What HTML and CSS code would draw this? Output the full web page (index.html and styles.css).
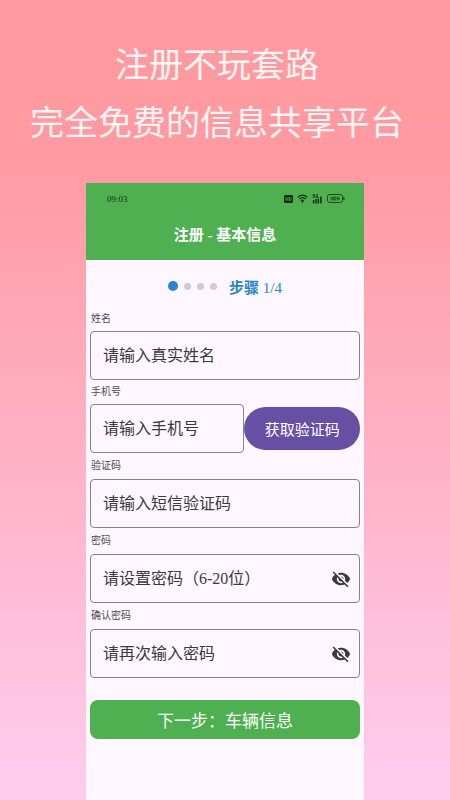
FILE: index.html
```html
<!DOCTYPE html>
<html lang="zh-CN">

<head>
    <meta charset="UTF-8">
    <meta name="viewport" content="width=device-width, initial-scale=1.0">
    <title>注册 - 基本信息</title>
    <link rel="stylesheet" href="styles.css">
</head>

<body>
    <h1 class="slogan">注册不玩套路<br>完全免费的信息共享平台</h1>

    <div class="phone">
        <header class="topbar">
            <div class="status">
                <span>09:03</span>
                <div class="status-icons">
                    <!-- HD -->
                    <svg width="9" height="8" viewBox="0 0 9 8">
                        <rect width="9" height="8" rx="1" fill="#12300f" />
                        <path d="M2 2.2v3.6M4 2.2v3.6M2 4h2M5.5 2.5v3h.6q1.2 0 1.2-1.5t-1.2-1.5z" fill="none" stroke="#4eb050" stroke-width=".7" />
                    </svg>
                    <!-- wifi -->
                    <svg width="11" height="9" viewBox="0 0 11 9">
                        <path d="M.7 3.2q4.8-4.2 9.6 0M2.3 5q3.2-2.7 6.4 0M3.9 6.7q1.6-1.3 3.2 0" fill="none" stroke="#12300f" stroke-width="1.2" />
                        <circle cx="5.5" cy="7.9" r=".9" fill="#12300f" />
                    </svg>
                    <!-- 5G -->
                    <svg width="11" height="10" viewBox="0 0 11 10">
                        <path d="M2.8.6H1v1.3h1.7v1.5H.8M6 .6H4.2v2.8H6V2.2h-.8" fill="none" stroke="#12300f" stroke-width=".8" />
                        <path d="M.8 6h1.5v3.5H.8zM3.2 5h1.5v4.5H3.2zM5.6 4.5h1.5v5H5.6zM8.2 2.5h1.5v7H8.2z" fill="#12300f" />
                    </svg>
                    <!-- battery -->
                    <svg class="battery" width="18" height="9" viewBox="0 0 18 9">
                        <rect x=".5" y=".5" width="15" height="8" rx="2" fill="none" stroke="#12300f" />
                        <rect x="3" y="2.5" width="10" height="4" fill="#12300f" opacity=".35" />
                        <path d="M5 3v3M6.5 3h1.8v3H6.5zM10 3v1.5h1.8M11.8 3v3" fill="none" stroke="#12300f" stroke-width=".6" />
                        <rect x="16.2" y="3" width="1.3" height="3" rx=".6" fill="#12300f" />
                    </svg>
                </div>
            </div>
            <h2 class="title">注册 - 基本信息</h2>
        </header>

        <form class="form">
            <div class="steps">
                <ul class="dots">
                    <li class="current"></li>
                    <li></li>
                    <li></li>
                    <li></li>
                </ul>
                <span class="step-text"><b>步骤</b> 1/4</span>
            </div>

            <label class="label" for="name">姓名</label>
            <div class="field">
                <input type="text" id="name" placeholder="请输入真实姓名">
            </div>

            <label class="label" for="phone">手机号</label>
            <div class="row">
                <div class="field">
                    <input type="tel" id="phone" placeholder="请输入手机号">
                </div>
                <button type="button" class="btn-code">获取验证码</button>
            </div>

            <label class="label" for="code">验证码</label>
            <div class="field">
                <input type="text" id="code" placeholder="请输入短信验证码">
            </div>

            <label class="label" for="pwd">密码</label>
            <div class="field">
                <input type="password" id="pwd" placeholder="请设置密码（6-20位）">
                <button type="button" class="eye" aria-label="显示密码">
                    <svg width="20" height="20" viewBox="0 0 24 24">
                        <path d="M12 7c2.76 0 5 2.24 5 5 0 .65-.13 1.26-.36 1.83l2.92 2.92c1.51-1.26 2.7-2.89 3.43-4.75-1.73-4.39-6-7.5-11-7.5-1.4 0-2.74.25-3.98.7l2.16 2.16C10.74 7.13 11.35 7 12 7zM2 4.27l2.28 2.28.46.46C3.08 8.3 1.78 10.02 1 12c1.73 4.39 6 7.5 11 7.5 1.55 0 3.03-.3 4.38-.84l.42.42L19.73 22 21 20.73 3.27 3 2 4.27zM7.53 9.8l1.55 1.55c-.05.21-.08.43-.08.65 0 1.66 1.34 3 3 3 .22 0 .44-.03.65-.08l1.55 1.55c-.67.33-1.41.53-2.2.53-2.76 0-5-2.24-5-5 0-.79.2-1.53.53-2.2zm4.31-.78l3.15 3.15.02-.16c0-1.66-1.34-3-3-3l-.17.01z" />
                    </svg>
                </button>
            </div>

            <label class="label" for="pwd2">确认密码</label>
            <div class="field">
                <input type="password" id="pwd2" placeholder="请再次输入密码">
                <button type="button" class="eye" aria-label="显示密码">
                    <svg width="20" height="20" viewBox="0 0 24 24">
                        <path d="M12 7c2.76 0 5 2.24 5 5 0 .65-.13 1.26-.36 1.83l2.92 2.92c1.51-1.26 2.7-2.89 3.43-4.75-1.73-4.39-6-7.5-11-7.5-1.4 0-2.74.25-3.98.7l2.16 2.16C10.74 7.13 11.35 7 12 7zM2 4.27l2.28 2.28.46.46C3.08 8.3 1.78 10.02 1 12c1.73 4.39 6 7.5 11 7.5 1.55 0 3.03-.3 4.38-.84l.42.42L19.73 22 21 20.73 3.27 3 2 4.27zM7.53 9.8l1.55 1.55c-.05.21-.08.43-.08.65 0 1.66 1.34 3 3 3 .22 0 .44-.03.65-.08l1.55 1.55c-.67.33-1.41.53-2.2.53-2.76 0-5-2.24-5-5 0-.79.2-1.53.53-2.2zm4.31-.78l3.15 3.15.02-.16c0-1.66-1.34-3-3-3l-.17.01z" />
                    </svg>
                </button>
            </div>

            <button type="button" class="btn-next">下一步：车辆信息</button>
        </form>
    </div>
</body>

</html>
```
FILE: styles.css
```css
* {
    margin: 0;
    padding: 0;
    box-sizing: border-box;
}

body {
    min-height: 100vh;
    display: flex;
    flex-direction: column;
    background: linear-gradient(#ff9aa0, #ff9aa2 20%, #ffcdef);
    font-family: "Liberation Serif", "Noto Sans CJK SC", serif;
}

input,
button {
    font-family: inherit;
    border: none;
    background: none;
}

button {
    cursor: pointer;
}

.slogan {
    padding: 37px 16px 30px 0;
    font-size: 34px;
    font-weight: 400;
    line-height: 58px;
    text-align: center;
    color: #fff4f2;
}

/* 手机界面 */
.phone {
    flex: 1;
    margin: 0 86px;
    background: #fef7ff;
}

.topbar {
    background: #4eb050;
}

.status {
    height: 31px;
    padding: 0 19px 0 21px;
    display: flex;
    align-items: center;
    justify-content: space-between;
    font-size: 9px;
    color: #12300f;
}

.status-icons {
    display: flex;
    align-items: center;
    gap: 4px;
}

.battery {
    opacity: .8;
}

.title {
    height: 46px;
    padding-bottom: 4px;
    line-height: 42px;
    font-size: 15px;
    text-align: center;
    color: #fff;
}

.form {
    padding: 0 4px 20px;
}

/* 步骤 */
.steps {
    height: 47px;
    padding-top: 5px;
    display: flex;
    align-items: center;
    justify-content: center;
    gap: 12px;
}

.dots {
    display: flex;
    align-items: center;
    gap: 6px;
    list-style: none;
}

.dots li {
    width: 7px;
    height: 7px;
    border-radius: 50%;
    background: #cfcbd2;
}

.dots li.current {
    width: 10px;
    height: 10px;
    background: #2585d3;
}

.step-text {
    font-size: 15px;
    color: #2585c8;
}

/* 表单 */
.label {
    display: block;
    padding-left: 1px;
    line-height: 24px;
    font-size: 10px;
    color: #504b54;
}

.row ~ .label {
    line-height: 26px;
}

.field {
    height: 49px;
    padding: 0 8px 0 12px;
    display: flex;
    align-items: center;
    border: 1px solid #86818a;
    border-radius: 4px;
}

.field input {
    flex: 1;
    min-width: 0;
    height: 100%;
    font-size: 16px;
    outline: none;
    color: #3c3840;
}

.field input::placeholder {
    color: #3c3840;
}

.eye {
    display: flex;
    fill: #3c3840;
}

.row {
    display: grid;
    grid-template-columns: minmax(0, 4fr) minmax(0, 3fr);
    align-items: center;
}

.btn-code {
    height: 43px;
    border-radius: 22px;
    background: #674fa3;
    font-size: 15px;
    color: #fff;
}

.btn-next {
    width: 100%;
    height: 39px;
    margin-top: 22px;
    border-radius: 8px;
    background: #4eb050;
    font-size: 17px;
    color: #fff;
}
```
